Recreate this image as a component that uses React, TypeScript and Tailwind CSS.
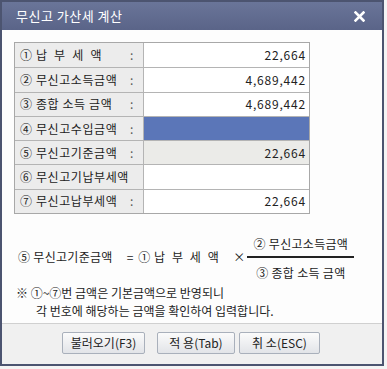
const rows = [
    { label: '① 납  부  세  액', colon: true, value: '22,664', tone: 'white' },
    { label: '② 무신고소득금액', colon: true, value: '4,689,442', tone: 'white' },
    { label: '③ 종합 소득 금액', colon: true, value: '4,689,442', tone: 'white' },
    { label: '④ 무신고수입금액', colon: true, value: '', tone: 'blue' },
    { label: '⑤ 무신고기준금액', colon: true, value: '22,664', tone: 'gray' },
    { label: '⑥ 무신고기납부세액', colon: false, value: '', tone: 'white' },
    { label: '⑦ 무신고납부세액', colon: true, value: '22,664', tone: 'white' },
];

const toneClass: Record<string, string> = {
    white: 'bg-white',
    blue: 'bg-[#5b76b8]',
    gray: 'bg-[#ebebe8]',
};

const font = { fontFamily: '"Noto Sans CJK KR", "Noto Sans", sans-serif' };

export default function App() {
    return (
        <div className="w-[387px] h-[369px] bg-[#f4f4f4]" style={font}>
            <div className="w-[384px] h-[366px] border-2 border-[#4c5470] bg-[#fdfdfd] flex flex-col">
                {/* Title bar */}
                <div className="h-[28px] shrink-0 bg-gradient-to-b from-[#6a7599] to-[#5a6488] flex items-center justify-between pl-[14px] pr-[17px]">
                    <span className="text-white text-[13px] tracking-[0.5px]">무신고 가산세 계산</span>
                    <svg width="11" height="11" viewBox="0 0 11 11">
                        <path d="M1.5 1.5L9.5 9.5M9.5 1.5L1.5 9.5" stroke="#fff" strokeWidth="2.6" strokeLinecap="square" />
                    </svg>
                </div>

                {/* Body */}
                <div className="flex-1 flex flex-col">
                    <div className="pt-[12px] pl-[12px]">
                        <div className="w-[296px] border border-[#a8a8a8]">
                            {rows.map((row, i) => (
                                <div key={i} className={`flex h-[24.3px] ${i > 0 ? 'border-t border-[#b4b4b4]' : ''}`}>
                                    <div className="w-[129px] shrink-0 bg-[#ececec] border-r border-[#b4b4b4] flex items-center justify-between pl-[5px] pr-[9px] text-[12px] text-[#222] whitespace-pre tracking-[0.6px]">
                                        <span>{row.label}</span>
                                        {row.colon && <span className="text-[#555]">:</span>}
                                    </div>
                                    <div className={`flex-1 flex items-center justify-end pr-[3px] text-[12px] text-[#222] tracking-[0.8px] ${toneClass[row.tone]}`}>
                                        {row.value}
                                    </div>
                                </div>
                            ))}
                        </div>
                    </div>

                    {/* Formula */}
                    <div className="flex items-start pl-[16px] mt-[20px] text-[12px] text-[#222] whitespace-pre">
                        <span className="mt-[14px] leading-[17px] tracking-[0.3px]">⑤ 무신고기준금액</span>
                        <span className="mt-[14px] leading-[17px] ml-[14px]">=</span>
                        <span className="mt-[14px] leading-[17px] ml-[5px] tracking-[0.5px]">① 납  부  세  액</span>
                        <span className="mt-[14px] leading-[17px] ml-[14px] mr-[2px]">×</span>
                        <div className="flex flex-col items-center w-[107px]">
                            <span className="leading-[20px] pb-[2px] tracking-[0.3px]">② 무신고소득금액</span>
                            <div className="h-[2px] w-full bg-[#222]" />
                            <span className="leading-[20px] mt-[5px] tracking-[0.3px]">③ 종합 소득 금액</span>
                        </div>
                    </div>

                    {/* Note */}
                    <div className="pl-[14px] mt-[1px] text-[12px] text-[#222] leading-[18px]">
                        <div>※ ①~⑦번 금액은 기본금액으로 반영되니</div>
                        <div className="pl-[20px]">각 번호에 해당하는 금액을 확인하여 입력합니다.</div>
                    </div>
                </div>

                {/* Buttons */}
                <div className="h-[41px] shrink-0 border-t border-[#d0d0d0] bg-[#f0f0f0] flex items-start pt-[8px] pl-[60px]">
                    <button className="w-[83px] h-[22px] border border-[#a9b0bb] rounded-[2px] bg-gradient-to-b from-[#fbfbfb] to-[#e2e4e8] text-[12px] text-[#222]">불러오기(F3)</button>
                    <button className="ml-[12px] w-[78px] h-[22px] border border-[#a9b0bb] rounded-[2px] bg-gradient-to-b from-[#fbfbfb] to-[#e2e4e8] text-[12px] text-[#222] whitespace-pre">적 용(Tab)</button>
                    <button className="ml-[4px] w-[81px] h-[22px] border border-[#a9b0bb] rounded-[2px] bg-gradient-to-b from-[#fbfbfb] to-[#e2e4e8] text-[12px] text-[#222] whitespace-pre">취 소(ESC)</button>
                </div>
            </div>
        </div>
    );
}
